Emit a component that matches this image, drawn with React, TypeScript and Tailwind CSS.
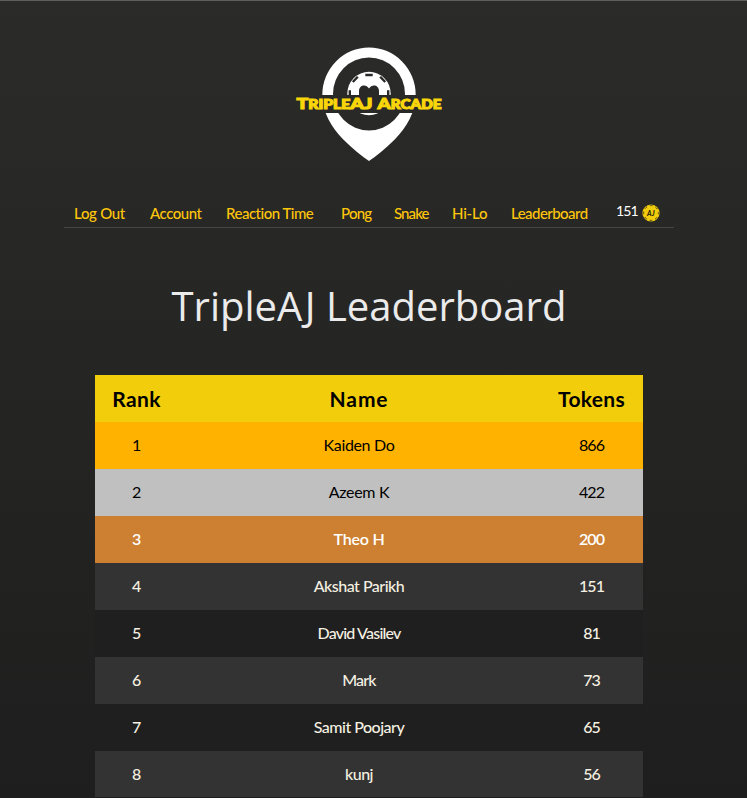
const nav = [
  { label: 'Log Out', cls: 'ml-[10px] w-[76px] tracking-[-0.3px]' },
  { label: 'Account', cls: 'w-[76px] tracking-[-0.45px]' },
  { label: 'Reaction Time', cls: 'w-[115px] tracking-[-0.5px]' },
  { label: 'Pong', cls: 'w-[53px] tracking-[-0.8px]' },
  { label: 'Snake', cls: 'w-[58px] tracking-[-0.9px]' },
  { label: 'Hi-Lo', cls: 'w-[59px] tracking-[-0.2px]' },
  { label: 'Leaderboard', cls: 'w-[105px] tracking-[-0.55px]' },
];

const rows = [
  { name: 'Kaiden Do', tokens: 866, cls: 'bg-[#ffb300] text-black', track: 'tracking-[-0.35px]' },
  { name: 'Azeem K', tokens: 422, cls: 'bg-[#c0c0c0] text-black', track: 'tracking-[-0.3px]' },
  { name: 'Theo H', tokens: 200, cls: 'bg-[#cd7f32] text-white font-semibold', track: 'tracking-[-0.2px]' },
  { name: 'Akshat Parikh', tokens: 151, cls: 'bg-[#333333] text-[#f5f0e1] font-medium', track: 'tracking-[-0.5px]' },
  { name: 'David Vasilev', tokens: 81, cls: 'bg-[#1f1f1f] text-[#f5f0e1] font-medium', track: 'tracking-[-0.8px]' },
  { name: 'Mark', tokens: 73, cls: 'bg-[#333333] text-[#f5f0e1] font-medium', track: 'tracking-[-0.8px]' },
  { name: 'Samit Poojary', tokens: 65, cls: 'bg-[#1f1f1f] text-[#f5f0e1] font-medium', track: 'tracking-[-0.5px]' },
  { name: 'kunj', tokens: 56, cls: 'bg-[#333333] text-[#f5f0e1] font-medium', track: 'tracking-[-0.5px]' },
];

function Logo() {
  return (
    <svg width="150" height="116" viewBox="294 46 150 116" className="block">
      <path
        fill="#fff"
        fillRule="evenodd"
        d="M322.3 95a46.7 47.5 0 0 1 93.4 0c0 17-9 32-21 44.500Q381 153 369 161Q357 153 343.300 139.500C331.300 127 322.300 112 322.300 95ZM333 94a36 36.500 0 1 0 72 0a36 36.500 0 1 0-72 0Z"
      />
      <circle cx="369" cy="93.500" r="21.700" fill="#fff" />
      <g stroke="#292928" strokeWidth="2.400">
        <path d="M365.300 75h7.400M352.800 82l5-5.300M380.200 76.700l5 5.300M349.800 90.200v5.500M388.200 90.200v5.500" />
      </g>
      <path fill="#292928" d="M359 97V91c0-6.200 7-7.500 10-2.500c3-5 10-3.700 10 2.500v6Z" />
      <rect x="294" y="95" width="150" height="18" fill="#292928" />
      <g fill="#f8d60a" stroke="#f8d60a" strokeWidth="1.100" fontFamily="Lato, sans-serif" fontWeight="900">
        <text x="296.500" y="109" textLength="76" lengthAdjust="spacingAndGlyphs">
          <tspan fontSize="15.500">T</tspan><tspan fontSize="12.500">RIPLE</tspan><tspan fontSize="15.500">AJ</tspan>
        </text>
        <text x="377.500" y="109" textLength="64" lengthAdjust="spacingAndGlyphs">
          <tspan fontSize="15.500">A</tspan><tspan fontSize="12.500">RCADE</tspan>
        </text>
      </g>
    </svg>
  );
}

function Token() {
  return (
    <svg width="18" height="18" viewBox="0 0 18 18" className="ml-[5px] mt-[2px] block shrink-0">
      <circle cx="9" cy="9" r="8.600" fill="#f2cd0c" />
      <circle cx="9" cy="9" r="7.400" fill="none" stroke="#4d4410" strokeWidth="1" strokeDasharray="2.800 3.012" strokeDashoffset="1.400" />
      <text x="8.800" y="11.500" textAnchor="middle" fontSize="7" fontStyle="italic" fontWeight="900" fontFamily="Lato, sans-serif" fill="#29260d">AJ</text>
    </svg>
  );
}

export default function App() {
  return (
    <div className="h-[798px] w-[747px] overflow-hidden border-y border-t-[#5e5f5c] border-b-[#1e1e1e] bg-linear-to-b from-[#2b2b29] to-[#1e1e1e] font-[Lato,sans-serif]">
      <header className="flex flex-col">
        <div className="mt-[45px] flex h-[116px] pl-[294px]">
          <Logo />
        </div>
        <nav className="ml-16 mt-[35px] flex h-[31px] w-[610px] border-b border-[#454543] text-[15px] leading-[32px] font-medium text-[#ffc60b]">
          {nav.map((item) => (
            <a key={item.label} className={`shrink-0 whitespace-nowrap ${item.cls}`}>{item.label}</a>
          ))}
          <div className="flex items-center text-white">
            <span className="w-[21px] -translate-y-px text-[14px] font-normal tracking-[-0.9px]">151</span>
            <Token />
          </div>
        </nav>
      </header>
      <main>
        <h1 className="ml-[171.5px] mt-[51px] h-[54px] whitespace-nowrap font-['Open_Sans',sans-serif] text-[40px] leading-[54px] text-[#ebebeb]">
          Triple<span className="tracking-[2.5px]">A</span>J Leaderboard
        </h1>
        <table className="ml-[95px] mt-[42px] w-[548px] table-fixed border-collapse text-center">
          <colgroup>
            <col className="w-[83px]" />
            <col className="w-[362px]" />
            <col className="w-[103px]" />
          </colgroup>
          <thead>
            <tr className="h-[47px] bg-[#f2cd0c] text-[21px] font-extrabold text-black">
              <th className="p-0 tracking-[0.4px]">Rank</th>
              <th className="p-0 tracking-[0.9px]">Name</th>
              <th className="p-0 tracking-[0.3px]">Tokens</th>
            </tr>
          </thead>
          <tbody>
            {rows.map((row, i) => (
              <tr key={row.name} className={`h-[47px] text-[16px] ${row.cls}`}>
                <td className="p-0 pb-px tracking-[-0.5px]">{i + 1}</td>
                <td className={`p-0 pb-px ${row.track}`}>{row.name}</td>
                <td className="p-0 pb-px tracking-[-1px]">{row.tokens}</td>
              </tr>
            ))}
          </tbody>
        </table>
      </main>
    </div>
  );
}
